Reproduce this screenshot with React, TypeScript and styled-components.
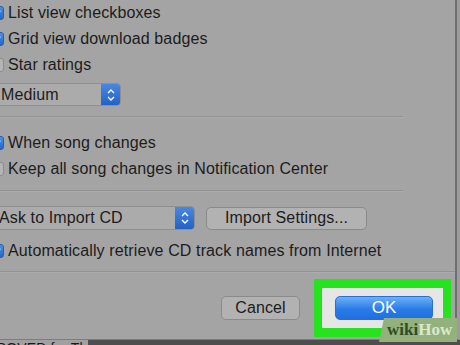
import React from 'react'
import styled, { createGlobalStyle } from 'styled-components'

const GlobalStyle = createGlobalStyle`
  html, body {
    margin: 0;
    padding: 0;
    background: #a3a3a3;
    overflow: hidden;
  }
  body {
    font-family: "Liberation Sans", Arial, sans-serif;
    color: #1c1c1c;
    letter-spacing: 0.12px;
  }
`

const Page = styled.div`
  width: 460px;
  height: 345px;
  display: flex;
  flex-direction: column;
  overflow: hidden;
`

const Top = styled.div`
  display: flex;
  height: 340px;
`

const Dialog = styled.div`
  position: relative;
  margin-left: -10px;
  width: 465px;
  flex: none;
  display: flex;
  flex-direction: column;
  background: #a4a4a4;
  border-right: 2px solid #6f6f6f;
`

const Edge = styled.div`
  flex: 1;
  background: #9c9c9c;
`

const Section = styled.div`
  display: flex;
  flex-direction: column;
  padding-top: ${p => p.$top || 0}px;
  padding-bottom: ${p => p.$bottom || 0}px;
`

const CheckRow = styled.label`
  height: 26px;
  display: flex;
  align-items: center;
  gap: 4px;
  font-size: 16px;
  white-space: nowrap;
  margin-top: ${p => p.$mt || 0}px;
`

const Box = styled.span`
  width: 14px;
  height: 14px;
  flex: none;
  box-sizing: border-box;
  border-radius: 3px;
  display: flex;
  align-items: center;
  justify-content: center;
  background: ${p => (p.$on ? 'linear-gradient(#4d8fe0, #2467c8)' : '#b4b4b4')};
  border: 1px solid ${p => (p.$on ? '#2b5fae' : '#8d8d8d')};
`

const Popup = styled.div`
  width: ${p => p.$w}px;
  height: ${p => p.$h}px;
  margin-top: ${p => p.$mt || 0}px;
  box-sizing: border-box;
  display: flex;
  align-items: center;
  background: #ababab;
  border: 1px solid #8f8f8f;
  border-radius: 4px;
  font-size: 16px;
  padding-left: ${p => p.$pl}px;
  overflow: hidden;
  flex: none;
`

const PopupLabel = styled.span`
  flex: 1;
  white-space: nowrap;
`

const Stepper = styled.span`
  width: 20px;
  align-self: stretch;
  margin: -1px -1px -1px 0;
  border-radius: 0 4px 4px 0;
  background: linear-gradient(#4a8ae2, #2160c4);
  display: flex;
  align-items: center;
  justify-content: center;
`

const Divider = styled.div`
  height: 1px;
  width: ${p => (p.$full ? '100%' : '413px')};
  background: #929292;
  border-bottom: 1px solid #acacac;
  flex: none;
`

const ImportRow = styled.div`
  display: flex;
  align-items: center;
  gap: 11px;
`

const Button = styled.button`
  height: ${p => p.$h || 23}px;
  width: ${p => p.$w}px;
  box-sizing: border-box;
  border: 1px solid #8a8a8a;
  border-radius: 5px;
  background: #b2b2b2;
  font-family: "Liberation Sans", Arial, sans-serif;
  font-size: 16px;
  letter-spacing: 0.12px;
  color: #1c1c1c;
  padding: 0;
`

const ButtonBar = styled.div`
  display: flex;
  align-items: center;
  justify-content: flex-end;
  gap: 14px;
  padding: 6px 4px 0 0;
`

const Highlight = styled.div`
  border: 8px solid #27e31f;
  border-top-width: 9px;
  border-bottom-width: 9px;
  background: #e6e6e6;
  padding: 8px 10px 8px 13px;
  display: flex;
`

const OkButton = styled.button`
  width: 98px;
  height: 24px;
  border: 1px solid #2a6fd0;
  border-radius: 5px;
  background: linear-gradient(#6cb0f7, #2a7ce9 55%, #1f6fe0);
  color: #ffffff;
  font-family: "Liberation Sans", Arial, sans-serif;
  font-size: 17px;
  padding: 0;
`

const Watermark = styled.div`
  position: absolute;
  right: -2px;
  bottom: -3px;
  width: 78px;
  height: 24px;
  background: #94b17d;
  clip-path: polygon(5px 0, 100% 0, 100% 100%, 0 100%);
  display: flex;
  align-items: center;
  padding-left: 8px;
  box-sizing: border-box;
  font-family: "Liberation Serif", "Times New Roman", serif;
  font-weight: bold;
  font-size: 17px;
  letter-spacing: 0;
`

const Wiki = styled.span`
  color: ${p => p.$c};
`

const Footer = styled.div`
  height: 5px;
  overflow: hidden;
  display: flex;
  background: #a0a0a0;
  border-top: 1px solid #7d7d7d;
`

const FooterText = styled.span`
  font-size: 14px;
  line-height: 14px;
  margin-top: 1px;
  color: #1a1a1a;
  white-space: nowrap;
  width: 92px;
  margin-left: -4px;
`

const FooterDark = styled.span`
  flex: 1;
  background: #4e4e4e;
`

function Check({ on }) {
  return (
    <Box $on={on}>
      {on && (
        <svg width="10" height="10" viewBox="0 0 10 10">
          <path d="M2 5.2 L4.2 7.4 L8.2 2.6" fill="none" stroke="#fff" strokeWidth="1.6" />
        </svg>
      )}
    </Box>
  )
}

function Arrows() {
  return (
    <svg width="10" height="14" viewBox="0 0 10 14">
      <path d="M2 5 L5 2 L8 5 M2 9 L5 12 L8 9" fill="none" stroke="#fff" strokeWidth="1.4" />
    </svg>
  )
}

export default function App() {
  return (
    <>
      <GlobalStyle />
      <Page>
        <Top>
          <Dialog>
            <Section $bottom={10}>
              <CheckRow><Check on />List view checkboxes</CheckRow>
              <CheckRow><Check on />Grid view download badges</CheckRow>
              <CheckRow><Check />Star ratings</CheckRow>
              <Popup $w={131} $h={23} $mt={5} $pl={10}>
                <PopupLabel>Medium</PopupLabel>
                <Stepper><Arrows /></Stepper>
              </Popup>
            </Section>
            <Divider />
            <Section $top={12} $bottom={8}>
              <CheckRow><Check on />When song changes</CheckRow>
              <CheckRow><Check />Keep all song changes in Notification Center</CheckRow>
            </Section>
            <Divider />
            <Section $top={14} $bottom={7}>
              <ImportRow>
                <Popup $w={205} $h={24} $pl={8}>
                  <PopupLabel>Ask to Import CD</PopupLabel>
                  <Stepper><Arrows /></Stepper>
                </Popup>
                <Button $w={161}>Import Settings...</Button>
              </ImportRow>
              <CheckRow $mt={8}><Check on />Automatically retrieve CD track names from Internet</CheckRow>
            </Section>
            <Divider $full />
            <ButtonBar>
              <Button $w={79} $h={24}>Cancel</Button>
              <Highlight>
                <OkButton>OK</OkButton>
              </Highlight>
            </ButtonBar>
            <Watermark>
              <Wiki $c="#2f4d25">wiki</Wiki>
              <Wiki $c="#dbe8cc">How</Wiki>
            </Watermark>
          </Dialog>
          <Edge />
        </Top>
        <Footer>
          <FooterText>ROVED for Th</FooterText>
          <FooterDark />
        </Footer>
      </Page>
    </>
  )
}
